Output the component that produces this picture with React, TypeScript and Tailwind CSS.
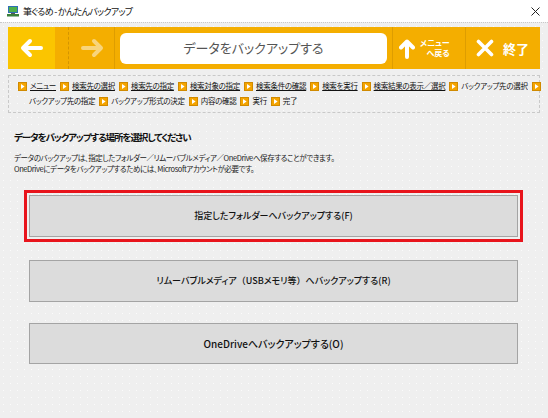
import React from "react";

const FONT = "font-['Noto_Sans_CJK_JP','Noto_Sans',sans-serif] [font-feature-settings:'palt']";

const Tri = () => (
  <svg width="9" height="9" viewBox="0 0 9 9" className="shrink-0">
    <rect x="0.5" y="0.5" width="8" height="8" fill="#f4a400" stroke="#d08a00" />
    <path d="M3 2 L6.6 4.5 L3 7 Z" fill="#ffffff" />
  </svg>
);

const row1 = [
  { t: "メニュー", u: true },
  { t: "検索先の選択", u: true },
  { t: "検索先の指定", u: true },
  { t: "検索対象の指定", u: true },
  { t: "検索条件の確認", u: true },
  { t: "検索を実行", u: true },
  { t: "検索結果の表示／選択", u: true },
  { t: "バックアップ先の選択", u: false },
];
const row2 = ["バックアップ先の指定", "バックアップ形式の決定", "内容の確認", "実行", "完了"];

const W = "[font-feature-settings:normal]";

export default function App() {
  return (
    <div className={`w-[548px] h-[418px] bg-white flex flex-col overflow-hidden text-[#1a1a1a] ${FONT}`}>
      {/* title bar */}
      <div className="h-[22px] flex items-center pl-[7px] pr-[8px] shrink-0">
        <svg width="12" height="12" viewBox="0 0 12 12" className="shrink-0">
          <rect x="1" y="1" width="10" height="7" fill="#2f6fb5" />
          <rect x="2" y="2" width="8" height="5" fill="#4fb04a" />
          <rect x="0" y="9" width="12" height="2.5" fill="#3a7f3a" />
          <rect x="4" y="8" width="4" height="1" fill="#555" />
        </svg>
        <span className="ml-[4px] text-[9px] tracking-[-0.7px] leading-none text-[#111]">筆ぐるめ - かんたんバックアップ</span>
        <div className="flex-1" />
        <svg width="9" height="9" viewBox="0 0 9 9">
          <path d="M0.5 0.5 L8.5 8.5 M8.5 0.5 L0.5 8.5" stroke="#222" strokeWidth="1" />
        </svg>
      </div>

      {/* main */}
      <div className="flex-1 bg-[#efefef] bg-[radial-gradient(#fbfbfb_0.7px,transparent_0.8px)] bg-[length:7px_7px] border-t border-dotted border-[#c8c8c8] px-[8px] pt-[4px] flex flex-col">
        {/* toolbar */}
        <div className="h-[42px] flex bg-[#f4ae00] shrink-0">
          <div className="w-[47px] bg-[#fbc500] flex items-center justify-center">
            <svg width="24" height="20" viewBox="0 0 24 20">
              <path d="M10 3 L3 10 L10 17 M4 10 H21" stroke="#fff" strokeWidth="4" fill="none" strokeLinecap="round" strokeLinejoin="round" />
            </svg>
          </div>
          <div className="w-[14px] border-r border-dashed border-[#d49500]" />
          <div className="w-[46px] flex items-center justify-center border-r border-[#de9d00]">
            <svg width="24" height="20" viewBox="0 0 24 20">
              <path d="M14 3 L21 10 L14 17 M3 10 H20" stroke="#f8d47c" strokeWidth="4" fill="none" strokeLinecap="round" strokeLinejoin="round" />
            </svg>
          </div>
          <div className="w-[278px] flex items-center pl-[5px] pr-[5px] border-r border-[#de9d00]">
            <div className="w-[268px] h-[31px] bg-white rounded-[6px] flex items-center justify-center text-[13px] text-[#555]">
              データをバックアップする
            </div>
          </div>
          <div className="w-[73px] flex items-center pl-[6px] border-r border-[#de9d00] text-white">
            <svg width="16" height="21" viewBox="0 0 16 21" className="shrink-0">
              <path d="M8 19 V3.5 M2 9.5 L8 3.5 L14 9.5" stroke="#fff" strokeWidth="4" fill="none" strokeLinecap="round" strokeLinejoin="round" />
            </svg>
            <div className="ml-[5px] flex flex-col items-end text-[8px] leading-[10px] font-bold">
              <span>メニュー</span>
              <span>へ戻る</span>
            </div>
          </div>
          <div className="flex-1 flex items-center pl-[10px] text-white">
            <svg width="18" height="18" viewBox="0 0 18 18" className="shrink-0">
              <path d="M2.5 2.5 L15.5 15.5 M15.5 2.5 L2.5 15.5" stroke="#fff" strokeWidth="3.6" strokeLinecap="round" />
            </svg>
            <span className="ml-[9px] text-[13px] font-bold leading-none">終了</span>
          </div>
        </div>

        {/* breadcrumbs */}
        <div className="mt-[6px] h-[38px] border border-dashed border-[#c9c9c9] pt-[3px] flex flex-col gap-[1px] text-[7.5px] tracking-[-0.3px] text-[#111] shrink-0">
          <div className="h-[14px] flex items-center pl-[9px]">
            {row1.map((r, i) => (
              <React.Fragment key={i}>
                <Tri />
                <span className={`ml-[3px] mr-[4px] whitespace-nowrap ${r.u ? "underline underline-offset-[1px]" : ""}`}>{r.t}</span>
              </React.Fragment>
            ))}
            <Tri />
          </div>
          <div className="h-[14px] flex items-center pl-[20px]">
            {row2.map((t, i) => (
              <React.Fragment key={i}>
                {i > 0 && <Tri />}
                <span className={`${i > 0 ? "ml-[3px]" : ""} mr-[4px] whitespace-nowrap`}>{t}</span>
              </React.Fragment>
            ))}
          </div>
        </div>

        {/* heading */}
        <div className="mt-[17px] pl-[6px] text-[9.5px] tracking-[-1.1px] leading-[14px] font-bold text-[#111]">
          データをバックアップする場所を選択してください
        </div>
        <div className="mt-[8px] pl-[6px] text-[7.5px] tracking-[-0.4px] leading-[11px] text-[#222]">
          <div>データのバックアップは、指定したフォルダー／リムーバブルメディア／OneDriveへ保存することができます。</div>
          <div>OneDriveにデータをバックアップするためには、Microsoftアカウントが必要です。</div>
        </div>

        {/* buttons */}
        <div className="pl-[21px] flex flex-col">
          <button className="mt-[21px] w-[489px] h-[42px] bg-[#dcdcdc] border border-[#a4a4a4] outline-[3px] outline-[#e8141c] outline-offset-[2px] flex items-center justify-center text-[9px] font-medium text-[#111]">
            指定したフォルダーへバックアップする(F)
          </button>
          <button className="mt-[23px] w-[489px] h-[42px] bg-[#dcdcdc] border border-[#a4a4a4] flex items-center justify-center text-[9px] font-medium text-[#111]">
            リムーバブルメディア<span className={W}>（</span>USBメモリ等<span className={W}>）</span>へバックアップする(R)
          </button>
          <button className="mt-[21px] w-[489px] h-[41px] bg-[#dcdcdc] border border-[#a4a4a4] flex items-center justify-center text-[10px] font-medium text-[#111]">
            OneDriveへバックアップする(O)
          </button>
        </div>
      </div>
    </div>
  );
}
